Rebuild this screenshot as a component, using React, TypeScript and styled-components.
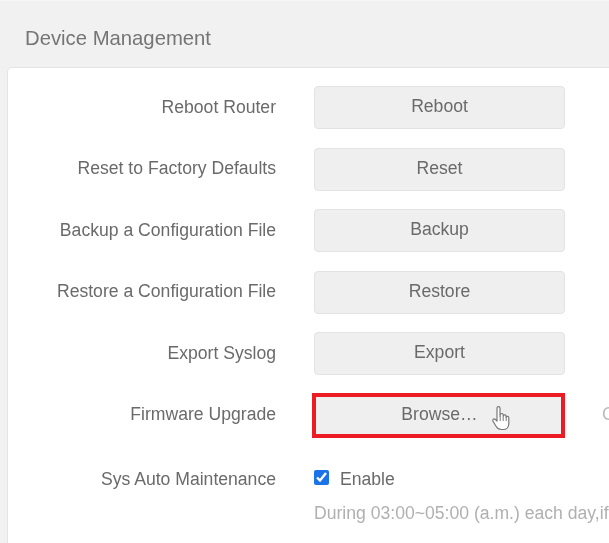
import React from "react";
import styled, { createGlobalStyle } from "styled-components";

const Global = createGlobalStyle`
  html, body { margin: 0; padding: 0; background: #f1f1f1; }
  body { font-family: "Liberation Sans", Arial, sans-serif; }
`;

const Page = styled.div`
  width: 609px;
  height: 543px;
  overflow: hidden;
  box-sizing: border-box;
  background: #f1f1f1;
  border-top: 1px solid #f6f6f6;
  padding: 25px 0 0 7px;
  filter: blur(0.45px);
`;

const Title = styled.h1`
  margin: 0 0 16px 18px;
  height: 25px;
  font-size: 20.3px;
  line-height: 25px;
  font-weight: 400;
  color: #757575;
`;

const Card = styled.section`
  width: 640px;
  height: 500px;
  box-sizing: border-box;
  background: #fff;
  border: 1px solid #e4e4e4;
  border-radius: 5px;
  padding: 18px 0 0;
  display: flex;
  flex-direction: column;
  gap: 18.5px;
`;

const Row = styled.div`
  display: grid;
  grid-template-columns: 268px 251px auto;
  column-gap: 38px;
  align-items: center;
  min-height: 43px;
`;

const Label = styled.label`
  justify-self: end;
  font-size: 17.6px;
  line-height: 20px;
  margin-top: -2px;
  color: #6a6a6a;
  white-space: nowrap;
`;

const ActionWrap = styled.div`
  position: relative;
`;

const ActionButton = styled.button`
  width: 251px;
  height: 43px;
  box-sizing: border-box;
  background: #efefef;
  border: 1px solid #e3e3e3;
  border-radius: 4px;
  font-family: inherit;
  font-size: 17.6px;
  color: #6a6a6a;
  padding: 0 0 2px;
`;

const Highlight = styled.div`
  position: absolute;
  left: -2px;
  top: -1px;
  right: 0;
  bottom: -1px;
  border: 4.5px solid #ed1c24;
  pointer-events: none;
`;

const Cursor = styled.svg`
  position: absolute;
  left: 177px;
  top: 11px;
  width: 22px;
  height: 27px;
`;

const Side = styled.span`
  font-size: 17.6px;
  color: #bbb;
  margin-left: -1px;
  margin-top: -2px;
`;

const CheckRow = styled.div`
  display: flex;
  align-items: center;
  gap: 11px;
`;

const Check = styled.input`
  width: 15px;
  height: 15px;
  margin: -4px 0 0;
  accent-color: #1a73e8;
`;

const CheckText = styled.span`
  font-size: 17.6px;
  line-height: 24px;
  color: #6a6a6a;
`;

const MaintRow = styled(Row)`
  align-items: start;
  min-height: 0;
  margin-top: 11px;
`;

const MaintLabel = styled(Label)`
  line-height: 24px;
  margin-top: 1px;
`;

const Stack = styled.div`
  width: 295px;
  overflow: hidden;
  display: flex;
  flex-direction: column;
  gap: 11px;
  padding-top: 1px;
`;

const Hint = styled.p`
  margin: 0;
  font-size: 17.6px;
  line-height: 22px;
  color: #b0b0b0;
  white-space: nowrap;
`;

const rows = [
  ["Reboot Router", "Reboot"],
  ["Reset to Factory Defaults", "Reset"],
  ["Backup a Configuration File", "Backup"],
  ["Restore a Configuration File", "Restore"],
  ["Export Syslog", "Export"],
];

export default function App() {
  return (
    <>
      <Global />
      <Page>
        <Title>Device Management</Title>
        <Card>
          {rows.map(([label, action]) => (
            <Row key={label}>
              <Label>{label}</Label>
              <ActionButton>{action}</ActionButton>
            </Row>
          ))}
          <Row>
            <Label>Firmware Upgrade</Label>
            <ActionWrap>
              <ActionButton>Browse…</ActionButton>
              <Highlight />
              <Cursor viewBox="0 0 22 27">
                <path
                  d="M6 3.2c0-2 3-2 3 0v8l.3-1.6c.3-1.6 2.8-1.4 2.8.3l.2 1c.3-1.5 2.7-1.3 2.8.4l.1.8c.5-1.3 2.6-1 2.6.7v5.6c0 3.6-2.2 6.1-5.6 6.1h-2c-2.5 0-3.8-1-5-3L2 16.3c-1-1.7 1-3 2.4-1.8L6 16z"
                  fill="#fff"
                  stroke="#777"
                  strokeWidth="1.2"
                  strokeLinejoin="round"
                />
                <path d="M9.2 11v5M12.2 11v5M15.2 12v4" stroke="#777" strokeWidth="1" fill="none" />
              </Cursor>
            </ActionWrap>
            <Side>C</Side>
          </Row>
          <MaintRow>
            <MaintLabel>Sys Auto Maintenance</MaintLabel>
            <Stack>
              <CheckRow>
                <Check type="checkbox" defaultChecked />
                <CheckText>Enable</CheckText>
              </CheckRow>
              <Hint>During 03:00~05:00 (a.m.) each day,if</Hint>
            </Stack>
          </MaintRow>
        </Card>
      </Page>
    </>
  );
}
